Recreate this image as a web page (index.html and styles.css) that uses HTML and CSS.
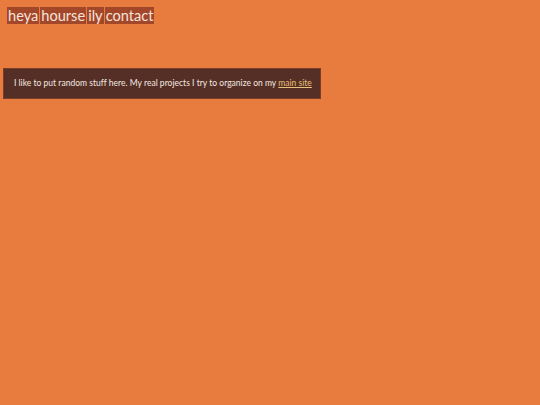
FILE: index.html
```html
<!DOCTYPE html>
<html>
<head>
<meta charset="utf-8">
<link rel="stylesheet" href="styles.css">
</head>
<body>
<nav class="nav">
  <a class="nav-item" href="#">heya</a>
  <a class="nav-item" href="#">hourse</a>
  <a class="nav-item" href="#">ily</a>
  <a class="nav-item" href="#">contact</a>
</nav>
<div class="note">
  I like to put random stuff here. My real projects I try to organize on my <a class="note-link" href="#">main site</a>
</div>
</body>
</html>
```
FILE: styles.css
```css
html, body {
  margin: 0;
  padding: 0;
  background: #e87c3e;
  font-family: Lato, "Open Sans", sans-serif;
}
.nav {
  display: flex;
  gap: 1px;
  padding: 7px 0 0 7px;
}
.nav-item {
  display: block;
  background: #a3472b;
  color: #f6e4da;
  text-decoration: none;
  font-size: 14.6px;
  line-height: 17px;
  padding: 0 1px;
}
.note {
  margin: 44px 0 0 3px;
  background: #552f25;
  border: 1px solid #7a3d28;
  color: #f3e8e2;
  font-size: 8.5px;
  letter-spacing: 0.02px;
  line-height: 29px;
  padding: 0 0 0 10px;
  box-sizing: border-box;
  width: 318px;
  height: 31px;
  white-space: nowrap;
}
.note-link {
  color: #e9c07a;
}
```
